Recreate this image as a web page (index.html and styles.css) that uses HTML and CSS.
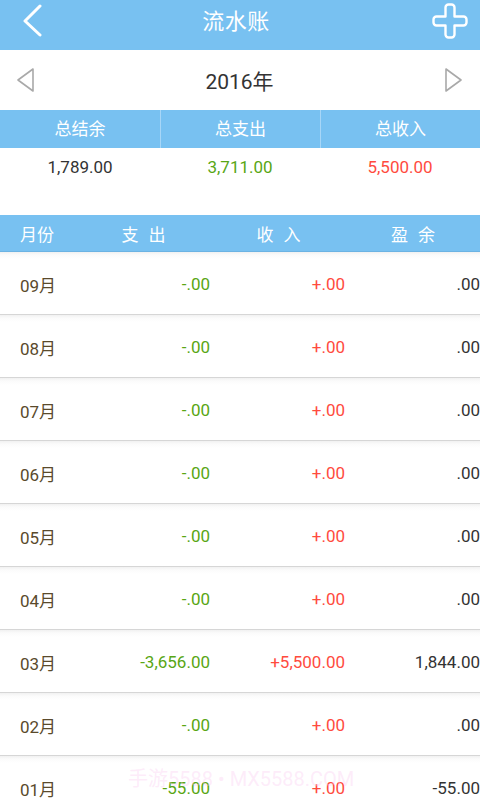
FILE: index.html
```html
<!DOCTYPE html>
<html lang="zh">
<head>
<meta charset="utf-8">
<title>流水账</title>
<link rel="stylesheet" href="styles.css">
</head>
<body>
<div class="app">
  <header class="topbar">
    <svg class="icon back" width="40" height="50" viewBox="0 0 40 50"><polyline points="38,6 23,21 38,35" fill="none" stroke="#fff" stroke-width="3" stroke-linecap="round" stroke-linejoin="round"/></svg>
    <div class="title">流水账</div>
    <svg class="icon plus" width="40" height="50" viewBox="0 0 40 50"><path d="M15.5,7.5 a3,3 0 0 1 3,-3 h3 a3,3 0 0 1 3,3 v9 h9 a3,3 0 0 1 3,3 v3 a3,3 0 0 1 -3,3 h-9 v9 a3,3 0 0 1 -3,3 h-3 a3,3 0 0 1 -3,-3 v-9 h-9 a3,3 0 0 1 -3,-3 v-3 a3,3 0 0 1 3,-3 h9 z" fill="none" stroke="#fff" stroke-width="2.4" stroke-linejoin="round"/></svg>
  </header>

  <div class="yearbar">
    <svg class="tri" width="20" height="26" viewBox="0 0 20 26"><polygon points="17,2 2,13 17,24" fill="none" stroke="#a9a9a9" stroke-width="1.6" stroke-linejoin="round"/></svg>
    <div class="year">2016年</div>
    <svg class="tri" width="20" height="26" viewBox="0 0 20 26"><polygon points="3,2 18,13 3,24" fill="none" stroke="#a9a9a9" stroke-width="1.6" stroke-linejoin="round"/></svg>
  </div>

  <div class="summary">
    <div class="sum-head">
      <div class="sh">总结余</div>
      <div class="sh">总支出</div>
      <div class="sh">总收入</div>
    </div>
    <div class="sum-vals">
      <div class="sv dark">1,789.00</div>
      <div class="sv green">3,711.00</div>
      <div class="sv red">5,500.00</div>
    </div>
  </div>

  <div class="thead">
    <div class="th th-month">月份</div>
    <div class="th">支出</div>
    <div class="th">收入</div>
    <div class="th">盈余</div>
  </div>

  <div class="rows">
    <div class="row"><div class="m">09月</div><div class="green">-.00</div><div class="red">+.00</div><div class="dark">.00</div></div>
    <div class="row"><div class="m">08月</div><div class="green">-.00</div><div class="red">+.00</div><div class="dark">.00</div></div>
    <div class="row"><div class="m">07月</div><div class="green">-.00</div><div class="red">+.00</div><div class="dark">.00</div></div>
    <div class="row"><div class="m">06月</div><div class="green">-.00</div><div class="red">+.00</div><div class="dark">.00</div></div>
    <div class="row"><div class="m">05月</div><div class="green">-.00</div><div class="red">+.00</div><div class="dark">.00</div></div>
    <div class="row"><div class="m">04月</div><div class="green">-.00</div><div class="red">+.00</div><div class="dark">.00</div></div>
    <div class="row"><div class="m">03月</div><div class="green">-3,656.00</div><div class="red">+5,500.00</div><div class="dark">1,844.00</div></div>
    <div class="row"><div class="m">02月</div><div class="green">-.00</div><div class="red">+.00</div><div class="dark">.00</div></div>
    <div class="row"><div class="m">01月</div><div class="green">-55.00</div><div class="red">+.00</div><div class="dark">-55.00</div></div>
  </div>

  <div class="watermark">手游5588 • MX5588.COM</div>
</div>
</body>
</html>
```

FILE: styles.css
```css
html, body {
  margin: 0;
  padding: 0;
  background: #fff;
}
body {
  font-family: Roboto, "Noto Sans CJK SC", sans-serif;
  width: 480px;
  height: 800px;
  overflow: hidden;
}
.app {
  position: relative;
  width: 480px;
  height: 800px;
  overflow: hidden;
}
.topbar {
  height: 50px;
  background: #78c1f1;
  display: flex;
  align-items: center;
  justify-content: space-between;
  padding: 0 10px 0 0;
}
.icon { display: block; }
.back { margin-left: 2px; }
.topbar .title {
  color: #fff;
  font-size: 22px;
  line-height: 50px;
  margin-top: -7px;
  letter-spacing: 0.5px;
}
.yearbar {
  height: 60px;
  display: flex;
  align-items: center;
  justify-content: space-between;
  padding: 0 17px 0 16px;
}
.year {
  font-size: 21px;
  color: #333;
  margin-top: -1px;
}
.sum-head {
  height: 38px;
  background: #78c1f1;
  display: grid;
  grid-template-columns: 160px 160px 160px;
}
.sh {
  color: #fff;
  font-size: 17px;
  text-align: center;
  line-height: 38px;
  border-left: 1px solid #a7d6f7;
}
.sh:first-child { border-left: none; }
.sum-vals {
  height: 67px;
  display: grid;
  grid-template-columns: 160px 160px 160px;
}
.sv {
  font-size: 17px;
  text-align: center;
  line-height: 38px;
}
.dark { color: #333; }
.green { color: #59a614; }
.red { color: #ff4b3e; }
.thead {
  height: 36px;
  background: #78c1f1;
  border-bottom: 1px solid #6cb3e3;
  display: grid;
  grid-template-columns: 76px 135px 135px 134px;
  align-items: center;
}
.th {
  color: #fff;
  font-size: 17px;
  text-align: center;
  letter-spacing: 10px;
  text-indent: 10px;
}
.th-month {
  text-align: left;
  padding-left: 20px;
  letter-spacing: 0;
  text-indent: 0;
}
.row {
  height: 62px;
  border-bottom: 1px solid #d6d6d6;
  display: grid;
  grid-template-columns: 100px 110px 135px 135px;
  align-items: center;
  font-size: 17px;
  background: linear-gradient(to bottom, #f1f1f1 0px, #fbfbfb 3px, #ffffff 7px);
}
.row > div { text-align: right; white-space: nowrap; padding-top: 2px; }
.row > .m {
  text-align: left;
  padding-left: 20px;
  color: #5a4a2c;
}
.watermark {
  position: absolute;
  left: 128px;
  top: 763px;
  font-size: 20px;
  color: rgba(250, 200, 240, 0.35);
  white-space: nowrap;
  pointer-events: none;
}
```
